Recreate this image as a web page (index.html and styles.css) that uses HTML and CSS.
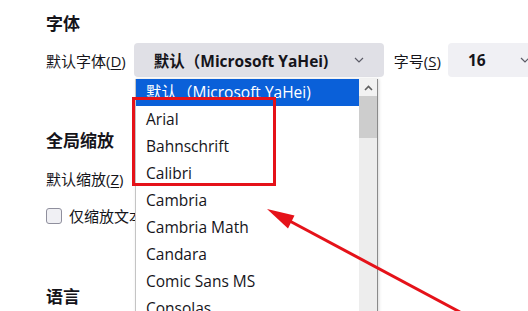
FILE: index.html
```html
<!DOCTYPE html>
<html lang="zh-CN">
<head>
    <meta charset="UTF-8">
    <meta name="viewport" content="width=device-width, initial-scale=1.0">
    <title>字体设置</title>
    <link rel="stylesheet" href="styles.css">
</head>
<body>
    <div class="page">
        <section class="group">
            <h2 class="group-title">字体</h2>
            <div class="row">
                <span class="label">默认字体(<u>D</u>)</span>
                <div class="select select-font">
                    <span>默认（Microsoft YaHei)</span>
                    <svg class="chevron" width="10" height="6" viewBox="0 0 10 6"><path d="M1 1l4 4 4-4" fill="none" stroke="#5b5b66" stroke-width="1.2"/></svg>
                </div>
                <span class="label label-size">字号(<u>S</u>)</span>
                <div class="select select-size">
                    <span>16</span>
                    <svg class="chevron" width="10" height="6" viewBox="0 0 10 6"><path d="M1 1l4 4 4-4" fill="none" stroke="#5b5b66" stroke-width="1.2"/></svg>
                </div>
            </div>
        </section>

        <section class="group group-zoom">
            <h2 class="group-title">全局缩放</h2>
            <div class="row">
                <span class="label">默认缩放(<u>Z</u>)</span>
            </div>
            <label class="check-row">
                <span class="checkbox"></span>
                <span>仅缩放文本</span>
            </label>
        </section>

        <section class="group group-lang">
            <h2 class="group-title">语言</h2>
        </section>

        <div class="dropdown">
            <ul class="options">
                <li class="selected">默认（Microsoft YaHei)</li>
                <li>Arial</li>
                <li>Bahnschrift</li>
                <li>Calibri</li>
                <li>Cambria</li>
                <li>Cambria Math</li>
                <li>Candara</li>
                <li>Comic Sans MS</li>
                <li>Consolas</li>
                <li>Constantia</li>
            </ul>
            <div class="scrollbar">
                <div class="scroll-btn">
                    <svg width="9" height="6" viewBox="0 0 9 6"><path d="M1 5l3.5-3.5L8 5" fill="none" stroke="#606060" stroke-width="1.6"/></svg>
                </div>
                <div class="scroll-thumb"></div>
            </div>
        </div>

        <svg class="annotation" width="528" height="311" viewBox="0 0 528 311">
            <rect x="133.5" y="98.5" width="141" height="86" fill="none" stroke="#e51219" stroke-width="3"/>
            <line x1="460" y1="312" x2="285" y2="218.5" stroke="#e51219" stroke-width="3"/>
            <polygon points="267,209 294.5,215.5 288,228.5" fill="#e51219"/>
        </svg>
    </div>
</body>
</html>
```

FILE: styles.css
```css
body {
    margin: 0;
    background-color: #fff;
    color: #15141a;
    font-family: "Open Sans", "Noto Sans CJK SC", sans-serif;
}

.page {
    position: relative;
    width: 528px;
    height: 311px;
    overflow: hidden;
    padding: 13px 0 0 46px;
    box-sizing: border-box;
}

.group-title {
    margin: 0;
    font-size: 17px;
    line-height: 22px;
    font-weight: 700;
}

.row {
    display: flex;
    align-items: center;
    height: 34px;
    margin-top: 8px;
}

.row > * {
    flex-shrink: 0;
}

.label {
    font-size: 15px;
    white-space: nowrap;
}

.label u {
    text-underline-offset: 2px;
}

.select {
    display: flex;
    align-items: center;
    justify-content: space-between;
    height: 34px;
    box-sizing: border-box;
    border-radius: 4px;
    font-size: 15.5px;
    font-weight: 700;
    background-color: #f0f0f4;
}

.select-font {
    width: 250px;
    margin-left: 8px;
    padding: 0 20px 0 20px;
    background-color: #e0e0e6;
}

.label-size {
    margin-left: 10px;
}

.select-size {
    width: 100px;
    margin-left: 7px;
    padding: 0 18px 0 20px;
}

.group-zoom {
    margin-top: 53px;
}

.group-zoom .row {
    margin-top: 9px;
}

.check-row {
    display: flex;
    align-items: center;
    gap: 7px;
    margin-top: 10px;
    font-size: 15px;
}

.checkbox {
    width: 14px;
    height: 14px;
    border: 1px solid #8f8f9d;
    border-radius: 3px;
    background-color: #f0f0f4;
}

.group-lang {
    margin-top: 60px;
}

.dropdown {
    position: absolute;
    left: 135px;
    top: 79px;
    width: 243px;
    height: 260px;
    display: flex;
    box-sizing: border-box;
    background-color: #fff;
    border-left: 1px solid #c4c4c4;
    border-right: 1px solid #8a8a8a;
    box-shadow: 1px 0 3px rgba(0, 0, 0, 0.15);
}

.options {
    flex: 1;
    margin: 0;
    padding: 0;
    list-style: none;
    font-size: 15.5px;
}

.options li {
    height: 27px;
    line-height: 27px;
    padding-left: 10px;
    white-space: nowrap;
}

.options .selected {
    background-color: #0a60d9;
    color: #fff;
}

.scrollbar {
    width: 18px;
    background-color: #ededed;
}

.scroll-btn {
    height: 17px;
    display: flex;
    align-items: center;
    justify-content: center;
    background-color: #f2f2f2;
}

.scroll-thumb {
    height: 42px;
    background-color: #cdcdcd;
}

.annotation {
    position: absolute;
    left: 0;
    top: 0;
}
```
